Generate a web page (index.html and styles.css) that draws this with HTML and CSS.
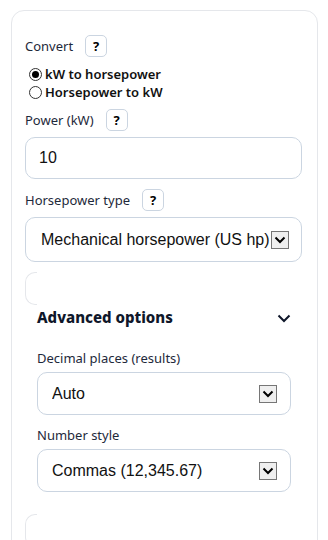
FILE: index.html
```html
<!DOCTYPE html>
<html>
<head>
<meta charset="utf-8">
<link rel="stylesheet" href="styles.css">
</head>
<body>
<div class="card">
  <div class="label-row first">
    <span class="label">Convert</span>
    <span class="help">?</span>
  </div>
  <div class="radios">
    <div class="radio-row"><span class="radio checked"></span><span class="radio-text">kW to horsepower</span></div>
    <div class="radio-row"><span class="radio"></span><span class="radio-text">Horsepower to kW</span></div>
  </div>
  <div class="label-row gap8">
    <span class="label">Power (kW)</span>
    <span class="help">?</span>
  </div>
  <div class="input">10</div>
  <div class="label-row gap10">
    <span class="label">Horsepower type</span>
    <span class="help">?</span>
  </div>
  <div class="select sel-wide">
    <span class="sel-text">Mechanical horsepower (US hp)</span>
    <span class="arrow"><svg width="12" height="8" viewBox="0 0 12 8"><path d="M1.5 1.5 L6 6 L10.5 1.5" fill="none" stroke="#000" stroke-width="2"/></svg></span>
  </div>
  <div class="stub"></div>
  <div class="advanced">
    <div class="adv-head">
      <span class="adv-title">Advanced options</span>
      <svg class="chev" width="14" height="9" viewBox="0 0 14 9"><path d="M1.5 1.5 L7 7 L12.5 1.5" fill="none" stroke="#0f172a" stroke-width="2"/></svg>
    </div>
    <div class="plain-label first-plain">Decimal places (results)</div>
    <div class="select sel-adv">
      <span class="sel-text">Auto</span>
      <span class="arrow"><svg width="12" height="8" viewBox="0 0 12 8"><path d="M1.5 1.5 L6 6 L10.5 1.5" fill="none" stroke="#000" stroke-width="2"/></svg></span>
    </div>
    <div class="plain-label">Number style</div>
    <div class="select sel-adv">
      <span class="sel-text">Commas (12,345.67)</span>
      <span class="arrow"><svg width="12" height="8" viewBox="0 0 12 8"><path d="M1.5 1.5 L6 6 L10.5 1.5" fill="none" stroke="#000" stroke-width="2"/></svg></span>
    </div>
  </div>
  <div class="stub bottom-stub"></div>
</div>
</body>
</html>
```

FILE: styles.css
```css
html, body {
  margin: 0;
  padding: 0;
  background: #ffffff;
}
body {
  font-family: "Noto Sans", "Open Sans", sans-serif;
  color: #1e293b;
  width: 328px;
  height: 540px;
  overflow: hidden;
}
.card {
  margin: 10px 0 0 11px;
  width: 307px;
  box-sizing: border-box;
  border: 1px solid #e5e7eb;
  border-radius: 13px;
  padding: 24px 15px 0 13px;
  height: 560px;
  overflow: hidden;
}
.label-row {
  display: flex;
  align-items: center;
  height: 22px;
}
.label {
  font-size: 13px;
  color: #1e293b;
}
.help {
  margin-left: 12px;
  width: 22px;
  height: 22px;
  box-sizing: border-box;
  border: 1px solid #cbd5e1;
  border-radius: 5px;
  display: flex;
  align-items: center;
  justify-content: center;
  font-weight: 700;
  font-size: 13px;
  color: #000;
}
.radios {
  margin-top: 8px;
  padding-left: 4px;
}
.radio-row {
  display: flex;
  align-items: center;
  height: 18px;
}
.radio {
  width: 13px;
  height: 13px;
  box-sizing: border-box;
  border: 1px solid #333;
  border-radius: 50%;
  display: flex;
  align-items: center;
  justify-content: center;
  margin-right: 3px;
}
.radio.checked::after {
  content: "";
  width: 7px;
  height: 7px;
  border-radius: 50%;
  background: #000;
}
.radio-text {
  font-size: 13px;
  font-weight: 600;
  color: #111;
}
.gap8 { margin-top: 8px; }
.gap10 { margin-top: 10px; }
.input {
  margin-top: 6px;
  height: 42px;
  box-sizing: border-box;
  border: 1px solid #cbd5e1;
  border-radius: 10px;
  padding-left: 13px;
  display: flex;
  align-items: center;
  font-family: "Liberation Sans", Arial, sans-serif;
  font-size: 16px;
  color: #111;
}
.select {
  box-sizing: border-box;
  border: 1px solid #cbd5e1;
  border-radius: 10px;
  display: flex;
  align-items: center;
  font-family: "Liberation Sans", Arial, sans-serif;
  font-size: 16px;
  color: #111;
}
.sel-wide {
  margin-top: 6px;
  height: 45px;
  padding: 0 12px 0 15px;
}
.sel-text {
  flex: 1;
  white-space: nowrap;
  overflow: hidden;
}
.arrow {
  width: 18px;
  height: 18px;
  box-sizing: border-box;
  border: 1px solid #767676;
  background: #efefef;
  display: flex;
  align-items: center;
  justify-content: center;
  flex-shrink: 0;
}
.stub {
  margin-top: 10px;
  width: 12px;
  height: 33px;
  box-sizing: border-box;
  border: 1px solid #e5e7eb;
  border-right: none;
  border-radius: 10px 0 0 10px;
}
.advanced {
  padding: 0 11px 0 12px;
}
.adv-head {
  display: flex;
  align-items: center;
  justify-content: space-between;
  height: 23px;
}
.adv-title {
  font-weight: 800;
  font-size: 15px;
  color: #0f172a;
}
.chev {
  margin-top: 4px;
}
.plain-label {
  font-size: 13px;
  line-height: 18px;
  color: #1e293b;
  margin-top: 11px;
}
.first-plain {
  margin-top: 21px;
}
.sel-adv {
  margin-top: 5px;
  height: 43px;
  padding: 0 13px 0 14px;
}
.bottom-stub {
  margin-top: 22px;
}
```
